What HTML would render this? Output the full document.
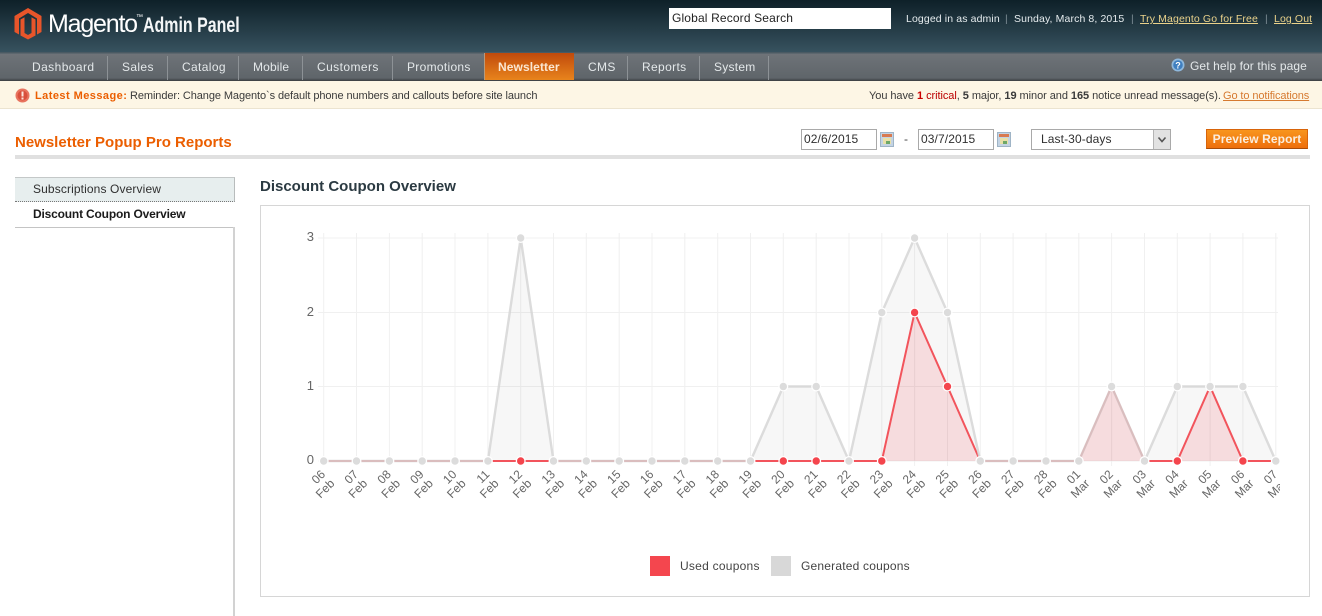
<!DOCTYPE html>
<html><head><meta charset="utf-8"><style>
html,body{margin:0;padding:0}
body{width:1322px;height:616px;overflow:hidden;background:#fff;position:relative;font:12px "Liberation Sans",Arial,sans-serif;color:#2f2f2f}
.a{position:absolute;white-space:nowrap}
a{color:inherit}
#hd{left:0;top:0;width:1322px;height:52px;background:linear-gradient(#0e2028,#37525f)}
#nav{left:0;top:52px;width:1322px;height:29px;background:linear-gradient(#4a5a63 0,#4a5a63 1px,#6e7378 2px,#5f656a 26px,#3a3d40 29px)}
.n{top:60px;color:#e4e8ea;letter-spacing:.36px;line-height:15px}
.s{top:56px;width:1px;height:24px;background:#8d9296}
#msg{left:0;top:81px;width:1322px;height:27px;background:#fdf6e5;border-bottom:1px solid #ece4d0}
.m{top:90px;font-size:11px;line-height:13px;color:#3a3a3a}
.inp{box-sizing:border-box;background:#fff;border:1px solid #a9a9a9;height:21px;top:129px;font-size:12px;line-height:19px;padding-left:2px;letter-spacing:.1px}
.t{top:13px;font-size:10.500px;line-height:13px;color:#e6ecee;letter-spacing:.12px}
.b{top:13px;font-size:10.500px;line-height:13px;color:#7d8d95}
</style></head><body>
<div class="a" id="hd"></div>
<svg class="a" style="left:14px;top:8px" width="28" height="32" viewBox="0 0 28 32"><path fill="#e8552a" d="M14 0 27.500 8V24l-4.500 2.500V10.500L14 5 5 10.500V26.500L.5 24V8Z"/><path fill="#e8552a" d="M6.500 11.500 10.500 9.200V25L14 27l3.500-2V9.200L21.500 11.500V27.500L14 31.500 6.500 27.500Z"/></svg>
<div class="a" style="left:48px;top:9px;font-size:25px;line-height:30px;color:#fff;letter-spacing:-1.200px">Magento</div>
<div class="a" style="left:136px;top:14px;font-size:7px;line-height:8px;color:#fff">™</div>
<div class="a" style="left:143px;top:14px;font-size:21px;line-height:24px;font-weight:bold;color:#f4f6f7;transform-origin:0 0;transform:scaleX(.76)">Admin Panel</div>
<div class="a" style="left:669px;top:8px;width:222px;height:21px;background:#fff;color:#222;line-height:21px;text-indent:3px;letter-spacing:.15px">Global Record Search</div>
<div class="a t" style="left:906px">Logged in as admin</div>
<div class="a b" style="left:1005px">|</div>
<div class="a t" style="left:1014px">Sunday, March 8, 2015</div>
<div class="a b" style="left:1131px">|</div>
<div class="a t" style="left:1140px;color:#ead28a;text-decoration:underline">Try Magento Go for Free</div>
<div class="a b" style="left:1265px">|</div>
<div class="a t" style="left:1274px;color:#ead28a;text-decoration:underline">Log Out</div>

<div class="a" id="nav"></div>
<div class="a n" style="left:32px;letter-spacing:.42px">Dashboard</div><div class="a s" style="left:107px"></div>
<div class="a n" style="left:122px">Sales</div><div class="a s" style="left:167px"></div>
<div class="a n" style="left:182px">Catalog</div><div class="a s" style="left:238px"></div>
<div class="a n" style="left:253px;letter-spacing:.15px">Mobile</div><div class="a s" style="left:302px"></div>
<div class="a n" style="left:317px;letter-spacing:.42px">Customers</div><div class="a s" style="left:392px"></div>
<div class="a n" style="left:407px;letter-spacing:.3px">Promotions</div>
<div class="a" style="left:484px;top:53px;width:1px;height:27px;background:#b89a7c"></div>
<div class="a" style="left:485px;top:53px;width:89px;height:27px;background:linear-gradient(#c04a0c,#e8841c)"></div>
<div class="a n" style="left:498px;color:#fbe6d2;font-weight:bold;letter-spacing:.1px">Newsletter</div>
<div class="a n" style="left:588px">CMS</div><div class="a s" style="left:627px"></div>
<div class="a n" style="left:642px">Reports</div><div class="a s" style="left:699px"></div>
<div class="a n" style="left:714px;letter-spacing:.25px">System</div><div class="a s" style="left:768px"></div>
<svg class="a" style="left:1171px;top:58px" width="14" height="14" viewBox="0 0 14 14"><circle cx="7" cy="7" r="6.500" fill="#8fb8dc"/><circle cx="7" cy="7" r="4.800" fill="#3f7fc0"/><text x="7" y="10.500" text-anchor="middle" font-size="9" font-weight="bold" fill="#fff" font-family="Liberation Sans">?</text></svg>
<div class="a" style="left:1190px;top:59px;line-height:15px;color:#e4e8ea;letter-spacing:.1px">Get help for this page</div>

<div class="a" id="msg"></div>
<svg class="a" style="left:15px;top:88px" width="15" height="15" viewBox="0 0 15 15"><circle cx="7.500" cy="7.500" r="7" fill="#e8745f"/><circle cx="7.500" cy="7.500" r="5" fill="#d9503c"/><rect x="6.500" y="3.500" width="2" height="5" fill="#fbe6dd"/><rect x="6.500" y="9.500" width="2" height="2" fill="#fbe6dd"/></svg>
<div class="a m" style="left:35px;color:#eb5e00;font-weight:bold;letter-spacing:.45px">Latest Message:</div>
<div class="a m" style="left:130px;letter-spacing:-.09px">Reminder: Change Magento`s default phone numbers and callouts before site launch</div>
<div class="a m" style="left:869px;letter-spacing:-.06px">You have <b style="color:#c00">1</b> <span style="color:#b00">critical</span>, <b>5</b> major, <b>19</b> minor and <b>165</b> notice unread message(s).</div>
<div class="a m" style="left:1223px;color:#d67a30;text-decoration:underline;letter-spacing:-.1px">Go to notifications</div>

<div class="a" style="left:15px;top:134px;font-size:15px;line-height:18px;font-weight:bold;color:#eb5e00">Newsletter Popup Pro Reports</div>
<div class="a" style="left:15px;top:155px;width:1295px;height:4px;background:#e0e0e0"></div>
<div class="a inp" style="left:801px;width:76px">02/6/2015</div>
<svg class="a" style="left:880px;top:132px" width="14" height="15" viewBox="0 0 14 15"><rect x=".5" y=".5" width="13" height="14" fill="#c4d4e4" stroke="#9fb4c6"/><rect x="2" y="2" width="10" height="3" fill="#d87a50"/><rect x="3" y="6" width="8" height="6" fill="#e8e0a8"/><rect x="6" y="9" width="4" height="3" fill="#6ea868"/></svg>
<div class="a" style="left:904px;top:132px;color:#444">-</div>
<div class="a inp" style="left:918px;width:76px">03/7/2015</div>
<svg class="a" style="left:997px;top:132px" width="14" height="15" viewBox="0 0 14 15"><rect x=".5" y=".5" width="13" height="14" fill="#c4d4e4" stroke="#9fb4c6"/><rect x="2" y="2" width="10" height="3" fill="#d87a50"/><rect x="3" y="6" width="8" height="6" fill="#e8e0a8"/><rect x="6" y="9" width="4" height="3" fill="#6ea868"/></svg>
<div class="a inp" style="left:1031px;width:140px;padding-left:9px;letter-spacing:.1px">Last-30-days</div>
<div class="a" style="left:1153px;top:130px;width:17px;height:19px;background:#e2e2e2;border-left:1px solid #b4b4b4;box-sizing:border-box"></div>
<svg class="a" style="left:1157px;top:136px" width="10" height="8" viewBox="0 0 10 8"><path d="M1.500 1.500 5 5.500 8.500 1.500" fill="none" stroke="#555" stroke-width="1.600"/></svg>
<div class="a" style="left:1206px;top:129px;width:102px;height:20px;box-sizing:border-box;background:linear-gradient(#f8951e,#ee6f0c);border:1px solid #d8640a;border-bottom-color:#a84c08;color:#fbeede;font-weight:bold;text-align:center;line-height:18px;letter-spacing:.1px">Preview Report</div>

<div class="a" style="left:15px;top:177px;width:220px;height:25px;box-sizing:border-box;background:#e7eeee;border-top:1px solid #c4c8c8;border-right:1px solid #b8bcbc;border-bottom:1px dotted #777"></div>
<div class="a" style="left:33px;top:182px;line-height:15px;color:#2f2f2f;letter-spacing:.12px">Subscriptions Overview</div>
<div class="a" style="left:33px;top:207px;line-height:15px;font-weight:bold;color:#1a1a1a;letter-spacing:-.18px">Discount Coupon Overview</div>
<div class="a" style="left:15px;top:227px;width:220px;height:1px;background:#c4c4c4"></div>
<div class="a" style="left:233px;top:227px;width:2px;height:389px;background:#d2d2d2"></div>

<div class="a" style="left:260px;top:178px;font-size:15px;line-height:18px;font-weight:bold;color:#2b3a42">Discount Coupon Overview</div>
<div class="a" style="left:260px;top:205px;width:1050px;height:392px;box-sizing:border-box;border:1px solid #d6d6d6"></div>

<svg class="a" style="left:261px;top:206px" width="1048" height="390" viewBox="261 206 1048 390" font-family="Liberation Sans,Arial,sans-serif">
<defs><clipPath id="c"><rect x="290" y="465" width="990" height="60"/></clipPath></defs>
<g stroke="#f0f0f0" stroke-width="1" fill="none">
<path d="M318 238H1278M318 312.500H1278M318 386.500H1278M318 461H1278"/>
<path d="M323.700 233V466M356.500 233V466M389.400 233V466M422.200 233V466M455 233V466M487.900 233V466M520.700 233V466M553.500 233V466M586.300 233V466M619.200 233V466M652 233V466M684.800 233V466M717.700 233V466M750.500 233V466M783.300 233V466M816.200 233V466M849 233V466M881.800 233V466M914.600 233V466M947.500 233V466M980.300 233V466M1013.100 233V466M1046 233V466M1078.800 233V466M1111.600 233V466M1144.500 233V466M1177.300 233V466M1210.100 233V466M1242.900 233V466M1275.800 233V466"/>
</g>
<g font-size="13" fill="#666" text-anchor="end"><text x="314" y="241">3</text><text x="314" y="316">2</text><text x="314" y="390">1</text><text x="314" y="464">0</text></g>
<path fill="rgba(120,120,120,.06)" d="M323.700 461H487.900L520.700 238 553.500 461H750.500L783.300 386.500H816.200L849 461 881.800 312.500 914.600 238 947.500 312.500 980.300 461H1078.800L1111.600 386.500 1144.500 461 1177.300 386.500H1242.900L1275.800 461Z"/>
<path fill="rgba(240,70,80,.15)" d="M881.800 461 914.600 312.500 947.500 386.500 980.300 461ZM1078.800 461 1111.600 386.500 1144.500 461ZM1177.300 461 1210.100 386.500 1242.900 461Z"/>
<path fill="none" stroke="#f2545c" stroke-width="2" d="M323.700 461H881.800L914.600 312.500 947.500 386.500 980.300 461H1078.800L1111.600 386.500 1144.500 461H1177.300L1210.100 386.500 1242.900 461H1275.800"/>
<g fill="#fff"><circle cx="520.700" cy="461" r="5"/><circle cx="783.300" cy="461" r="5"/><circle cx="816.200" cy="461" r="5"/><circle cx="881.800" cy="461" r="5"/><circle cx="914.600" cy="312.500" r="5"/><circle cx="947.500" cy="386.500" r="5"/><circle cx="1177.300" cy="461" r="5"/><circle cx="1242.900" cy="461" r="5"/></g>
<g fill="#f4454d"><circle cx="520.700" cy="461" r="3.700"/><circle cx="783.300" cy="461" r="3.700"/><circle cx="816.200" cy="461" r="3.700"/><circle cx="881.800" cy="461" r="3.700"/><circle cx="914.600" cy="312.500" r="3.700"/><circle cx="947.500" cy="386.500" r="3.700"/><circle cx="1177.300" cy="461" r="3.700"/><circle cx="1242.900" cy="461" r="3.700"/></g>
<g fill="none" stroke="rgba(212,212,212,.82)" stroke-width="2.400">
<path d="M323.700 461H487.900L520.700 238 553.500 461H750.500L783.300 386.500H816.200L849 461 881.800 312.500 914.600 238 947.500 312.500 980.300 461H1078.800L1111.600 386.500 1144.500 461 1177.300 386.500H1242.900L1275.800 461"/>
</g>
<g fill="#fff"><circle cx="323.700" cy="461" r="5"/><circle cx="356.500" cy="461" r="5"/><circle cx="389.400" cy="461" r="5"/><circle cx="422.200" cy="461" r="5"/><circle cx="455" cy="461" r="5"/><circle cx="487.900" cy="461" r="5"/><circle cx="520.700" cy="238" r="5"/><circle cx="553.500" cy="461" r="5"/><circle cx="586.300" cy="461" r="5"/><circle cx="619.200" cy="461" r="5"/><circle cx="652" cy="461" r="5"/><circle cx="684.800" cy="461" r="5"/><circle cx="717.700" cy="461" r="5"/><circle cx="750.500" cy="461" r="5"/><circle cx="783.300" cy="386.500" r="5"/><circle cx="816.200" cy="386.500" r="5"/><circle cx="849" cy="461" r="5"/><circle cx="881.800" cy="312.500" r="5"/><circle cx="914.600" cy="238" r="5"/><circle cx="947.500" cy="312.500" r="5"/><circle cx="980.300" cy="461" r="5"/><circle cx="1013.100" cy="461" r="5"/><circle cx="1046" cy="461" r="5"/><circle cx="1078.800" cy="461" r="5"/><circle cx="1111.600" cy="386.500" r="5"/><circle cx="1144.500" cy="461" r="5"/><circle cx="1177.300" cy="386.500" r="5"/><circle cx="1210.100" cy="386.500" r="5"/><circle cx="1242.900" cy="386.500" r="5"/><circle cx="1275.800" cy="461" r="5"/></g>
<g fill="#dcdcdc"><circle cx="323.700" cy="461" r="3.700"/><circle cx="356.500" cy="461" r="3.700"/><circle cx="389.400" cy="461" r="3.700"/><circle cx="422.200" cy="461" r="3.700"/><circle cx="455" cy="461" r="3.700"/><circle cx="487.900" cy="461" r="3.700"/><circle cx="520.700" cy="238" r="3.700"/><circle cx="553.500" cy="461" r="3.700"/><circle cx="586.300" cy="461" r="3.700"/><circle cx="619.200" cy="461" r="3.700"/><circle cx="652" cy="461" r="3.700"/><circle cx="684.800" cy="461" r="3.700"/><circle cx="717.700" cy="461" r="3.700"/><circle cx="750.500" cy="461" r="3.700"/><circle cx="783.300" cy="386.500" r="3.700"/><circle cx="816.200" cy="386.500" r="3.700"/><circle cx="849" cy="461" r="3.700"/><circle cx="881.800" cy="312.500" r="3.700"/><circle cx="914.600" cy="238" r="3.700"/><circle cx="947.500" cy="312.500" r="3.700"/><circle cx="980.300" cy="461" r="3.700"/><circle cx="1013.100" cy="461" r="3.700"/><circle cx="1046" cy="461" r="3.700"/><circle cx="1078.800" cy="461" r="3.700"/><circle cx="1111.600" cy="386.500" r="3.700"/><circle cx="1144.500" cy="461" r="3.700"/><circle cx="1177.300" cy="386.500" r="3.700"/><circle cx="1210.100" cy="386.500" r="3.700"/><circle cx="1242.900" cy="386.500" r="3.700"/><circle cx="1275.800" cy="461" r="3.700"/></g>
<g clip-path="url(#c)"><g transform="translate(1 -1)" font-size="12" fill="#666" text-anchor="end">
<text transform="translate(325 476) rotate(-45)">06<tspan x="0" dy="13">Feb</tspan></text>
<text transform="translate(357.800 476) rotate(-45)">07<tspan x="0" dy="13">Feb</tspan></text>
<text transform="translate(390.700 476) rotate(-45)">08<tspan x="0" dy="13">Feb</tspan></text>
<text transform="translate(423.500 476) rotate(-45)">09<tspan x="0" dy="13">Feb</tspan></text>
<text transform="translate(456.300 476) rotate(-45)">10<tspan x="0" dy="13">Feb</tspan></text>
<text transform="translate(489.200 476) rotate(-45)">11<tspan x="0" dy="13">Feb</tspan></text>
<text transform="translate(522 476) rotate(-45)">12<tspan x="0" dy="13">Feb</tspan></text>
<text transform="translate(554.800 476) rotate(-45)">13<tspan x="0" dy="13">Feb</tspan></text>
<text transform="translate(587.600 476) rotate(-45)">14<tspan x="0" dy="13">Feb</tspan></text>
<text transform="translate(620.500 476) rotate(-45)">15<tspan x="0" dy="13">Feb</tspan></text>
<text transform="translate(653.300 476) rotate(-45)">16<tspan x="0" dy="13">Feb</tspan></text>
<text transform="translate(686.100 476) rotate(-45)">17<tspan x="0" dy="13">Feb</tspan></text>
<text transform="translate(719 476) rotate(-45)">18<tspan x="0" dy="13">Feb</tspan></text>
<text transform="translate(751.800 476) rotate(-45)">19<tspan x="0" dy="13">Feb</tspan></text>
<text transform="translate(784.600 476) rotate(-45)">20<tspan x="0" dy="13">Feb</tspan></text>
<text transform="translate(817.500 476) rotate(-45)">21<tspan x="0" dy="13">Feb</tspan></text>
<text transform="translate(850.300 476) rotate(-45)">22<tspan x="0" dy="13">Feb</tspan></text>
<text transform="translate(883.100 476) rotate(-45)">23<tspan x="0" dy="13">Feb</tspan></text>
<text transform="translate(915.900 476) rotate(-45)">24<tspan x="0" dy="13">Feb</tspan></text>
<text transform="translate(948.800 476) rotate(-45)">25<tspan x="0" dy="13">Feb</tspan></text>
<text transform="translate(981.600 476) rotate(-45)">26<tspan x="0" dy="13">Feb</tspan></text>
<text transform="translate(1014.400 476) rotate(-45)">27<tspan x="0" dy="13">Feb</tspan></text>
<text transform="translate(1047.300 476) rotate(-45)">28<tspan x="0" dy="13">Feb</tspan></text>
<text transform="translate(1080.100 476) rotate(-45)">01<tspan x="0" dy="13">Mar</tspan></text>
<text transform="translate(1112.900 476) rotate(-45)">02<tspan x="0" dy="13">Mar</tspan></text>
<text transform="translate(1145.800 476) rotate(-45)">03<tspan x="0" dy="13">Mar</tspan></text>
<text transform="translate(1178.600 476) rotate(-45)">04<tspan x="0" dy="13">Mar</tspan></text>
<text transform="translate(1211.400 476) rotate(-45)">05<tspan x="0" dy="13">Mar</tspan></text>
<text transform="translate(1244.200 476) rotate(-45)">06<tspan x="0" dy="13">Mar</tspan></text>
<text transform="translate(1277.100 476) rotate(-45)">07<tspan x="0" dy="13">Mar</tspan></text>
</g></g>
<rect x="650" y="556" width="20" height="20" fill="#f4464e"/>
<rect x="771" y="556" width="20" height="20" fill="#d8d8d8"/>
<text x="680" y="570" font-size="12" fill="#444" letter-spacing=".25">Used coupons</text>
<text x="801" y="570" font-size="12" fill="#444" letter-spacing=".2">Generated coupons</text>
</svg>
</body></html>
